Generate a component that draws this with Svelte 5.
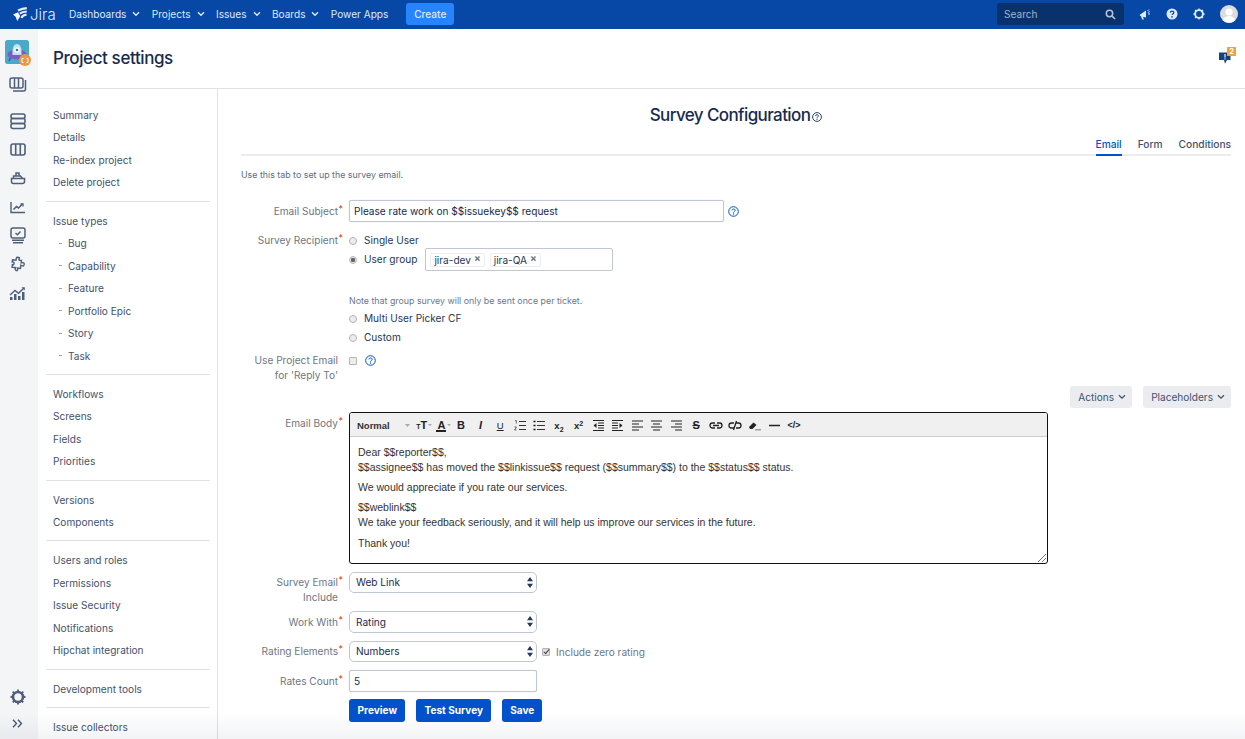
<script>
  const navItems = [
    { label: 'Dashboards', caret: true },
    { label: 'Projects', caret: true },
    { label: 'Issues', caret: true },
    { label: 'Boards', caret: true },
    { label: 'Power Apps', caret: false }
  ];

  const sideGroups = [
    { items: ['Summary', 'Details', 'Re-index project', 'Delete project'] },
    { title: 'Issue types', sub: ['Bug', 'Capability', 'Feature', 'Portfolio Epic', 'Story', 'Task'] },
    { items: ['Workflows', 'Screens', 'Fields', 'Priorities'] },
    { items: ['Versions', 'Components'] },
    { items: ['Users and roles', 'Permissions', 'Issue Security', 'Notifications', 'Hipchat integration'] },
    { items: ['Development tools'] },
    { items: ['Issue collectors'] }
  ];

  let subject = $state('Please rate work on $$issuekey$$ request');
  let recipient = $state('group');
  let replyTo = $state(false);
  let includeZero = $state(true);
  let rates = $state('5');
  let activeTab = $state('Email');
</script>

<div class="page">
  <header class="topbar">
    <div class="logo">
      <svg width="16" height="15" viewBox="0 0 16 15">
        <path d="M1 7.500 6 5.200l2.200 4L5.300 14 3.600 9.800z" fill="#fff"/>
        <path d="M6 3.400C8.500 2.400 11 1.600 14.800 1.200M7.800 6.600C9.500 5.400 11.800 4.700 14.800 4.500M9.500 11c.7-2 2.500-3 5-3.300" fill="none" stroke="#e6eefb" stroke-width="2.200"/>
      </svg>
      <span>Jira</span>
    </div>
    <nav class="nav">
      {#each navItems as item}
        <span class="nav-item">
          {item.label}
          {#if item.caret}
            <svg width="8" height="6" viewBox="0 0 8 6"><path d="M1 1.200 4 4.200l3-3" fill="none" stroke="#deebff" stroke-width="1.400"/></svg>
          {/if}
        </span>
      {/each}
      <button class="create">Create</button>
    </nav>
    <div class="top-right">
      <div class="search">
        <span>Search</span>
        <svg width="11" height="11" viewBox="0 0 11 11"><circle cx="4.500" cy="4.500" r="3.200" fill="none" stroke="#b3c2dc" stroke-width="1.500"/><path d="m7 7 3 3" stroke="#b3c2dc" stroke-width="1.700"/></svg>
      </div>
      <svg class="ti" width="12" height="12" viewBox="0 0 12 12"><path d="M.5 7 7 2.500v7L4 8.700l.8 2.800H3.200L2 8.200z" fill="#deebff"/><path d="M8.500 3 10 1.500M9 6h2M8.800 4.500l2-.8" stroke="#deebff" stroke-width=".9"/></svg>
      <svg class="ti" width="12" height="12" viewBox="0 0 12 12"><circle cx="6" cy="6" r="5.500" fill="#deebff"/><path d="M4.300 4.600C4.400 3.600 5 3.100 6 3.100s1.800.6 1.800 1.500c0 1.300-1.700 1.300-1.700 2.500" fill="none" stroke="#0747a6" stroke-width="1.300"/><circle cx="6" cy="8.900" r=".8" fill="#0747a6"/></svg>
      <svg class="ti" width="12" height="12" viewBox="0 0 12 12"><circle cx="6" cy="6" r="3.900" fill="none" stroke="#deebff" stroke-width="1.900"/><path d="M6 .4v2M6 9.600v2M.4 6h2M9.600 6h2M2 2l1.400 1.400M8.600 8.600 10 10M2 10l1.400-1.400M8.600 3.400 10 2" stroke="#deebff" stroke-width="1.300"/></svg>
      <svg class="avatar" width="18" height="18" viewBox="0 0 18 18"><circle cx="9" cy="9" r="9" fill="#dcdcdc"/><circle cx="9" cy="7" r="3.600" fill="#fff"/><path d="M2.800 15.400C4 12 6.400 11 9 11s5 1 6.200 4.400A9 9 0 0 1 2.800 15.400z" fill="#fff"/></svg>
    </div>
  </header>

  <div class="body">
    <aside class="rail">
      <div class="rail-top">
        <div class="project-logo">
          <svg width="24" height="24" viewBox="0 0 24 24">
            <rect width="24" height="24" rx="2.500" fill="#4aa8c8"/>
            <path d="M4 21l2-4M20 21l-2-4" stroke="#5b3fa8" stroke-width="1.500"/>
            <ellipse cx="12" cy="14.500" rx="9.500" ry="5" fill="#7b5cc4"/>
            <path d="M7.500 15c-.5-7 1-11 4.500-11s5 4 4.500 11z" fill="#bfe3ef"/>
            <circle cx="12" cy="10" r="2.800" fill="#fff"/>
            <circle cx="12" cy="10" r="1.300" fill="#3d6fa5"/>
          </svg>
          <span class="logo-badge"><svg width="8" height="7" viewBox="0 0 8 7"><path d="M2.500 1.500H1v4h1.500M5.500 1.500H7v4H5.500" fill="none" stroke="#fff" stroke-width="1"/></svg></span>
        </div>
        <div class="rail-icons">
          <svg width="18" height="16" viewBox="0 0 18 16" fill="none" stroke="#505f79" stroke-width="1.500"><rect x="1" y="1" width="13" height="10" rx="2"/><path d="M5.500 1v10M9.500 1v10M16.500 3v9a2 2 0 0 1-2 2H4"/></svg>
          <svg width="16" height="17" viewBox="0 0 16 17" fill="none" stroke="#505f79" stroke-width="1.600"><rect x="1" y="1" width="14" height="4.500" rx="2"/><rect x="1" y="5.500" width="14" height="5" rx="1.500"/><rect x="1" y="10.500" width="14" height="5" rx="2"/></svg>
          <svg width="16" height="13" viewBox="0 0 16 13" fill="none" stroke="#505f79" stroke-width="1.600"><rect x="1" y="1" width="14" height="11" rx="2"/><path d="M5.700 1v11M10.300 1v11"/></svg>
          <svg width="16" height="14" viewBox="0 0 16 14" fill="none" stroke="#505f79" stroke-width="1.500"><path d="M1.500 7.500h13v3a2 2 0 0 1-2 2h-9a2 2 0 0 1-2-2zM3.500 7.500V5h7l2 2.500M6 5V2h3v3"/></svg>
          <svg width="16" height="13" viewBox="0 0 16 13" fill="none" stroke="#505f79" stroke-width="1.400"><path d="M1 1v10.500h14"/><path d="M3.500 8.500 6.500 5.500l2 1.500 4-4" stroke-width="1.600"/><path d="M10.500 3h2.500v2.500" stroke-width="1.300"/></svg>
          <svg width="16" height="17" viewBox="0 0 16 17" fill="none" stroke="#505f79" stroke-width="1.500"><rect x="1" y="1" width="14" height="10" rx="2"/><path d="m5.500 6 2 1.800L10.500 4.500"/><path d="M2 13.300h12M3 15.700h10"/></svg>
          <svg width="16" height="16" viewBox="0 0 16 16" fill="none" stroke="#505f79" stroke-width="1.400"><path d="M6 1.500h2.500c.2 1-.3 1.500 0 2.500h2.500v2.500c1-.3 1.500-.8 2.500-.5.900.5.900 2.800 0 3.200-1 .3-1.500-.200-2.500-.5V12H8c.3 1 .8 1.500.3 2.500-1 .5-2.300 0-2.300-1-.2-.6.200-1 .200-1.500H2.500V9.500c1 .3 1.500 0 1.500-1.500S3 6.500 2 6.800V4.500h3.500C5.800 3.500 5 2.500 6 1.500z" transform="rotate(8 8 8)"/></svg>
          <svg width="17" height="15" viewBox="0 0 17 15"><path d="M1 14v-3h2.500v3zM5 14V8h2.500v6zM9 14v-4h2.500v4zM13 14V6h2.500v8z" fill="#505f79"/><path d="M1 9 6 4.500l3.500 2.800L15 2" fill="none" stroke="#505f79" stroke-width="1.400"/><path d="M12.500 1.300h3.300v3.300z" fill="#505f79"/></svg>
        </div>
      </div>
      <div class="rail-bottom">
        <svg width="16" height="16" viewBox="0 0 16 16" fill="none" stroke="#505f79"><circle cx="8" cy="8" r="5" stroke-width="2.600"/><path d="M8 .5v3M8 12.500v3M.5 8h3M12.500 8h3M2.700 2.700l2 2M11.300 11.300l2 2M2.700 13.300l2-2M11.300 4.700l2-2" stroke-width="1.800"/></svg>
        <svg width="11" height="9" viewBox="0 0 11 9" fill="none" stroke="#42526e" stroke-width="1.300"><path d="m1 .8 3.500 3.700L1 8.200M6 .8l3.500 3.700L6 8.200"/></svg>
      </div>
    </aside>

    <div class="content">
      <div class="title-bar">
        <h1>Project settings</h1>
        <svg class="feedback" width="17" height="17" viewBox="0 0 17 17">
          <path d="M0 5.500h11.500v7.500H8L6 16.800 5 13H0z" fill="#17437a"/>
          <path d="M6 7v3.500M6 11.300v1.200" stroke="#fff" stroke-width="1.100"/>
          <rect x="8" y="0" width="9" height="9" fill="#f0a33a" rx=".5"/>
          <text x="12.500" y="7.300" class="badge-num">2</text>
        </svg>
      </div>

      <div class="columns">
        <nav class="side">
          {#each sideGroups as group, i}
            <div class="side-group" class:first={i === 0}>
              {#if group.title}
                <a href="#top" class="side-link">{group.title}</a>
              {/if}
              {#each group.items ?? [] as item}
                <a href="#top" class="side-link">{item}</a>
              {/each}
              {#each group.sub ?? [] as item}
                <a href="#top" class="side-link sub"><i></i>{item}</a>
              {/each}
            </div>
          {/each}
        </nav>

        <main class="main">
          <h2>Survey Configuration<svg width="10" height="10" viewBox="0 0 10 10"><circle cx="5" cy="5" r="4.400" fill="none" stroke="#172b4d" stroke-width=".9"/><path d="M3.500 3.900C3.600 3.100 4.200 2.700 5 2.700s1.500.5 1.500 1.200c0 1-1.500 1-1.500 2" fill="none" stroke="#172b4d" stroke-width=".9"/><circle cx="5" cy="7.200" r=".6" fill="#172b4d"/></svg></h2>

          <div class="tabs">
            {#each ['Email', 'Form', 'Conditions'] as tab}
              <button class="tab" class:active={activeTab === tab} onclick={() => (activeTab = tab)}>{tab}</button>
            {/each}
          </div>

          <p class="intro">Use this tab to set up the survey email.</p>

          <div class="row subject-row">
            <div class="lbl">Email Subject<b>*</b></div>
            <div class="ctl inline">
              <input class="text subject" bind:value={subject} />
              <svg class="help-blue" width="11" height="11" viewBox="0 0 11 11"><use href="#qmark" /></svg>
            </div>
          </div>

          <div class="row recipient-row">
            <div class="lbl">Survey Recipient<b>*</b></div>
            <div class="ctl">
              <label class="radio"><input type="radio" value="single" bind:group={recipient} />Single User</label>
              <div class="group-line">
                <label class="radio"><input type="radio" value="group" bind:group={recipient} />User group</label>
                <div class="tag-box">
                  <span class="tag">jira-dev<em>×</em></span>
                  <span class="tag">jira-QA<em>×</em></span>
                </div>
              </div>
              <p class="note">Note that group survey will only be sent once per ticket.</p>
              <label class="radio r2"><input type="radio" value="multi" bind:group={recipient} />Multi User Picker CF</label>
              <label class="radio r2"><input type="radio" value="custom" bind:group={recipient} />Custom</label>
            </div>
          </div>

          <div class="row reply-row">
            <div class="lbl">Use Project Email<br />for 'Reply To'</div>
            <div class="ctl inline">
              <input class="check" type="checkbox" bind:checked={replyTo} />
              <svg class="help-blue" width="11" height="11" viewBox="0 0 11 11"><use href="#qmark" /></svg>
            </div>
          </div>

          <div class="action-row">
            <button class="ghost">Actions <svg width="8" height="6" viewBox="0 0 8 6"><path d="M1 1.200 4 4.200l3-3" fill="none" stroke="#42526e" stroke-width="1.300"/></svg></button>
            <button class="ghost">Placeholders <svg width="8" height="6" viewBox="0 0 8 6"><path d="M1 1.200 4 4.200l3-3" fill="none" stroke="#42526e" stroke-width="1.300"/></svg></button>
          </div>

          <div class="row body-row">
            <div class="lbl">Email Body<b>*</b></div>
            <div class="editor">
              <div class="toolbar">
                <span class="fmt">Normal<svg class="arrow" width="5" height="4" viewBox="0 0 5 4"><path d="M0 0h5L2.500 3z" fill="#aaa"/></svg></span>
                <span class="cell"><span class="t-size"><small>T</small>T</span><svg class="arrow" width="4" height="3" viewBox="0 0 5 4"><path d="M0 0h5L2.500 3z" fill="#aaa"/></svg></span>
                <span class="cell"><span class="t-color">A</span><svg class="arrow" width="4" height="3" viewBox="0 0 5 4"><path d="M0 0h5L2.500 3z" fill="#aaa"/></svg></span>
                <span class="cell t-b">B</span>
                <span class="cell t-i">I</span>
                <span class="cell t-u">U</span>
                <span class="cell"><svg width="12" height="11" viewBox="0 0 12 11"><path d="M5 1.500h7M5 5.500h7M5 9.500h7" stroke="#333" stroke-width="1"/><path d="M1 .5h1.300v3M.5 7h2l-2 3h2" stroke="#333" stroke-width=".7" fill="none"/></svg></span>
                <span class="cell"><svg width="12" height="11" viewBox="0 0 12 11"><path d="M4 1.500h8M4 5.500h8M4 9.500h8" stroke="#333" stroke-width="1"/><path d="M.5 1.500h2M.5 5.500h2M.5 9.500h2" stroke="#111" stroke-width="1.600"/></svg></span>
                <span class="cell t-x">x<sub>2</sub></span>
                <span class="cell t-x">x<sup>2</sup></span>
                <span class="cell"><svg width="11" height="11" viewBox="0 0 11 11"><path d="M0 .5h11M0 10.500h11M5 3h6M5 5.500h6M5 8h6" stroke="#222" stroke-width="1"/><path d="M3.500 3v5L.5 5.500z" fill="#222"/></svg></span>
                <span class="cell"><svg width="11" height="11" viewBox="0 0 11 11"><path d="M0 .5h11M0 10.500h11M0 3h6M0 5.500h6M0 8h6" stroke="#222" stroke-width="1"/><path d="M7.500 3v5l3-2.500z" fill="#222"/></svg></span>
                <span class="cell"><svg width="11" height="11" viewBox="0 0 11 11"><path d="M0 1h11M0 4h7M0 7h11M0 10h7" stroke="#222" stroke-width="1.100"/></svg></span>
                <span class="cell"><svg width="11" height="11" viewBox="0 0 11 11"><path d="M0 1h11M2 4h7M0 7h11M2 10h7" stroke="#222" stroke-width="1.100"/></svg></span>
                <span class="cell"><svg width="11" height="11" viewBox="0 0 11 11"><path d="M0 1h11M4 4h7M0 7h11M4 10h7" stroke="#222" stroke-width="1.100"/></svg></span>
                <span class="cell t-s">S</span>
                <span class="cell"><svg width="14" height="7" viewBox="0 0 14 7" fill="none" stroke="#222" stroke-width="1.300"><path d="M6 1H3.500a2.500 2.500 0 0 0 0 5H6M8 1h2.500a2.500 2.500 0 0 1 0 5H8M4 3.500h6"/></svg></span>
                <span class="cell"><svg width="14" height="11" viewBox="0 0 14 11" fill="none" stroke="#222" stroke-width="1.300"><path d="M6 3H3.500a2.500 2.500 0 0 0 0 5H6M8 3h2.500a2.500 2.500 0 0 1 0 5H8M8.500 1 5.500 10"/></svg></span>
                <span class="cell"><svg width="14" height="10" viewBox="0 0 14 10"><path d="M1 6 5.500 1.500l3 2.500L4.500 8H2z" fill="#222"/><path d="M7 8.800h6" stroke="#777" stroke-width="1"/></svg></span>
                <span class="cell"><svg width="11" height="3" viewBox="0 0 11 3"><path d="M0 1.500h11" stroke="#222" stroke-width="1.600"/></svg></span>
                <span class="cell t-code">&lt;/&gt;</span>
              </div>
              <div class="editor-text">
                <p>Dear $$reporter$$,<br />$$assignee$$ has moved the $$linkissue$$ request ($$summary$$) to the $$status$$ status.</p>
                <p>We would appreciate if you rate our services.</p>
                <p>$$weblink$$<br />We take your feedback seriously, and it will help us improve our services in the future.</p>
                <p>Thank you!</p>
              </div>
              <svg class="grip" width="8" height="8" viewBox="0 0 8 8"><path d="M8 0 0 8M8 4 4 8" stroke="#555" stroke-width=".8"/></svg>
            </div>
          </div>

          <div class="row include-row">
            <div class="lbl">Survey Email<b>*</b><br />Include</div>
            <div class="sel"><span>Web Link</span><svg width="6" height="11" viewBox="0 0 7 11" preserveAspectRatio="none"><path d="M3.500 0 7 4.200H0zM3.500 11 0 6.800h7z" fill="#253858"/></svg></div>
          </div>

          <div class="row work-row">
            <div class="lbl">Work With<b>*</b></div>
            <div class="sel"><span>Rating</span><svg width="6" height="11" viewBox="0 0 7 11" preserveAspectRatio="none"><path d="M3.500 0 7 4.200H0zM3.500 11 0 6.800h7z" fill="#253858"/></svg></div>
          </div>

          <div class="row elements-row">
            <div class="lbl">Rating Elements<b>*</b></div>
            <div class="ctl inline">
              <div class="sel"><span>Numbers</span><svg width="6" height="11" viewBox="0 0 7 11" preserveAspectRatio="none"><path d="M3.500 0 7 4.200H0zM3.500 11 0 6.800h7z" fill="#253858"/></svg></div>
              <label class="zero"><input class="check" type="checkbox" bind:checked={includeZero} />Include zero rating</label>
            </div>
          </div>

          <div class="row count-row">
            <div class="lbl">Rates Count<b>*</b></div>
            <input class="text count" bind:value={rates} />
          </div>

          <div class="row buttons-row">
            <div class="lbl"></div>
            <div class="buttons">
              <button class="primary">Preview</button>
              <button class="primary">Test Survey</button>
              <button class="primary">Save</button>
            </div>
          </div>
        </main>
      </div>
    </div>
  </div>

  <div class="fade"></div>

  <svg width="0" height="0" class="defs">
    <symbol id="qmark" viewBox="0 0 11 11">
      <circle cx="5.500" cy="5.500" r="4.800" fill="none" stroke="#0052cc" stroke-width="1"/>
      <path d="M3.800 4.400C3.900 3.500 4.600 3 5.500 3s1.700.6 1.700 1.400c0 1.100-1.700 1.100-1.700 2.200" fill="none" stroke="#0052cc" stroke-width="1"/>
      <circle cx="5.500" cy="8" r=".7" fill="#0052cc"/>
    </symbol>
  </svg>
</div>

<style>
  :global(body) {
    margin: 0;
    background: #fff;
    font-family: Inter, "Liberation Sans", sans-serif;
    color: #172b4d;
  }

  .page {
    position: relative;
    width: 1245px;
    height: 739px;
    overflow: hidden;
    font-size: 10.1px;
  }

  .defs {
    position: absolute;
  }

  .topbar {
    height: 29px;
    box-sizing: border-box;
    padding-bottom: 1px;
    background: #0747a6;
    display: flex;
    align-items: center;
    color: #deebff;
  }

  .logo {
    display: flex;
    align-items: center;
    gap: 2px;
    margin-left: 12px;
    width: 57px;
    flex: none;
    color: #deebff;
  }

  .logo span {
    font-size: 15px;
    font-weight: 300;
  }

  .nav {
    display: flex;
    align-items: center;
  }

  .nav-item {
    display: inline-flex;
    align-items: center;
    gap: 6px;
    margin-right: 11.4px;
    white-space: nowrap;
  }

  .create {
    margin-left: 6.5px;
    width: 48px;
    height: 22px;
    border: 0;
    border-radius: 3px;
    background: #2684ff;
    color: #deebff;
    font: 500 10.1px Inter, sans-serif;
  }

  .top-right {
    margin-left: auto;
    display: flex;
    align-items: center;
  }

  .search {
    width: 127px;
    height: 22px;
    box-sizing: border-box;
    background: #09326c;
    border-radius: 3px;
    padding: 0 8px 0 7px;
    display: flex;
    align-items: center;
    justify-content: space-between;
    color: #9fb3d1;
  }

  .ti {
    margin-left: 15px;
  }

  .avatar {
    margin: 0 7px 0 15px;
  }

  .body {
    display: flex;
    height: 710px;
  }

  .rail {
    width: 38px;
    flex: none;
    box-sizing: border-box;
    padding-right: 3px;
    background: #f4f5f7;
    display: flex;
    flex-direction: column;
    justify-content: space-between;
    align-items: center;
  }

  .rail-top {
    display: flex;
    flex-direction: column;
    align-items: center;
    padding-top: 11px;
  }

  .project-logo {
    position: relative;
    width: 24px;
    height: 24px;
    margin-right: 1px;
  }

  .logo-badge {
    position: absolute;
    right: -2px;
    bottom: -2px;
    width: 12px;
    height: 12px;
    border-radius: 50%;
    background: #f0963a;
    display: flex;
    align-items: center;
    justify-content: center;
  }

  .rail-icons {
    display: grid;
    grid-template-rows: 35.7px;
    grid-auto-rows: 28.7px;
    align-items: center;
    justify-items: center;
    margin-top: 7px;
  }

  .rail-icons svg:first-child {
    align-self: start;
    margin-top: 6px;
  }

  .rail-bottom {
    display: flex;
    flex-direction: column;
    align-items: center;
    gap: 14px;
    padding-bottom: 11px;
  }

  .content {
    flex: 1;
    min-width: 0;
  }

  .title-bar {
    height: 60px;
    box-sizing: border-box;
    border-bottom: 1px solid #dfe1e6;
    padding: 0 9px 0 15px;
    display: flex;
    align-items: center;
    justify-content: space-between;
  }

  h1 {
    margin: -2px 0 0;
    font-size: 17px;
    font-weight: 500;
    color: #172b4d;
    letter-spacing: -0.4px;
  }

  .feedback {
    margin-top: -6px;
  }

  .badge-num {
    font-size: 7.5px;
    font-weight: 700;
    fill: #fff;
    text-anchor: middle;
  }

  .columns {
    display: flex;
    height: 650px;
  }

  .side {
    width: 180px;
    flex: none;
    box-sizing: border-box;
    border-right: 1px solid #dfe1e6;
    padding: 14.75px 7px 0 8px;
  }

  .side-group {
    border-top: 1px solid #dfe1e6;
    padding: 8px 0 6.75px;
  }

  .side-group.first {
    border-top: 0;
    padding-top: 0;
  }

  .side-link {
    display: block;
    height: 22.5px;
    line-height: 22.5px;
    padding-left: 7px;
    color: #42526e;
    text-decoration: none;
    white-space: nowrap;
  }

  .side-link.sub {
    padding-left: 13px;
    display: flex;
    align-items: center;
  }

  .side-link.sub i {
    width: 3px;
    height: 1px;
    background: #97a0af;
    margin-right: 6px;
  }

  .main {
    flex: 1;
    min-width: 0;
    padding: 0 14px 0 23px;
  }

  h2 {
    margin: 15px 0 0;
    height: 23px;
    line-height: 23px;
    font-size: 17px;
    font-weight: 500;
    letter-spacing: -0.6px;
    display: flex;
    justify-content: center;
    align-items: center;
  }

  h2 svg {
    margin-left: 2px;
    margin-top: 2px;
  }

  .tabs {
    display: flex;
    justify-content: flex-end;
    gap: 16px;
    box-sizing: border-box;
    height: 29px;
    margin-bottom: 13px;
    padding-top: 6px;
    border-bottom: 2px solid #ebecf0;
  }

  .tab {
    border: 0;
    background: none;
    padding: 1px 0 0;
    height: 23px;
    color: #42526e;
    font: 500 10.2px Inter, sans-serif;
    border-bottom: 2px solid transparent;
  }

  .tab.active {
    color: #0052cc;
    border-bottom-color: #0052cc;
  }

  .intro {
    margin: 0;
    font-size: 8.85px;
    line-height: 12px;
    color: #5e6c84;
  }

  .row {
    display: flex;
    align-items: flex-start;
  }

  .lbl {
    width: 97px;
    flex: none;
    margin-right: 11px;
    text-align: right;
    color: #6f7682;
    line-height: 15px;
    white-space: nowrap;
    position: relative;
  }

  .lbl b {
    position: absolute;
    color: #de350b;
    font-weight: 400;
    font-size: 9px;
    line-height: 9px;
    margin-left: 0.5px;
  }

  .ctl {
    flex: 1;
    min-width: 0;
    color: #253858;
  }

  .inline {
    display: flex;
    align-items: center;
  }

  .text {
    box-sizing: border-box;
    height: 22px;
    border: 1px solid #c1c7d0;
    border-radius: 2px;
    padding: 0 4px;
    font: 10.1px Inter, sans-serif;
    color: #172b4d;
    outline: none;
    box-shadow: 0 0 1px rgba(9, 30, 66, 0.2);
  }

  .subject {
    width: 375px;
  }

  .count {
    width: 188px;
  }

  .subject-row {
    margin-top: 19px;
  }

  .subject-row .lbl {
    padding-top: 4px;
  }

  .help-blue {
    margin-left: 4px;
    flex: none;
  }

  .recipient-row {
    margin-top: 11px;
  }

  .radio {
    display: flex;
    align-items: center;
    height: 15px;
    line-height: 15px;
    white-space: nowrap;
  }

  .radio input {
    appearance: none;
    width: 8px;
    height: 8px;
    margin: 0 7px 0 0;
    border-radius: 50%;
    border: 1px solid #b5b5b5;
    background: #ececec;
    flex: none;
  }

  .radio input:checked {
    background: radial-gradient(circle, #666 0 2px, #ececec 2.500px);
  }

  .group-line {
    display: flex;
    align-items: center;
    height: 23px;
  }

  .tag-box {
    box-sizing: border-box;
    width: 188px;
    height: 23px;
    margin-left: 8px;
    border: 1px solid #c1c7d0;
    border-radius: 2px;
    padding: 4px 4px 0;
    display: flex;
    align-items: flex-start;
    gap: 5px;
  }

  .tag {
    display: inline-block;
    height: 12px;
    line-height: 12px;
    padding: 0 3px;
    border: 1px solid #ebecf0;
    border-radius: 2px;
    color: #253858;
    white-space: nowrap;
  }

  .tag em {
    font-style: normal;
    font-weight: 700;
    font-size: 10px;
    color: #6b778c;
    position: relative;
    top: -2px;
    margin-left: 3px;
  }

  .note {
    margin: 24px 0 0;
    font-size: 8.85px;
    line-height: 12px;
    color: #6b778c;
  }

  .r2 {
    margin-top: 4px;
  }

  .reply-row {
    margin-top: 8px;
  }

  .reply-row .ctl {
    height: 15px;
  }

  .reply-row .help-blue {
    margin-left: 1px;
  }

  .check {
    appearance: none;
    width: 8px;
    height: 8px;
    margin: 0 7px 0 0;
    border: 1px solid #b5b5b5;
    border-radius: 1px;
    background: #ececec;
    flex: none;
    position: relative;
  }

  .check:checked {
    background: #ddd;
  }

  .check:checked::after {
    content: '';
    position: absolute;
    left: 1.5px;
    top: -1px;
    width: 2px;
    height: 5px;
    border: solid #444;
    border-width: 0 1.500px 1.500px 0;
    transform: rotate(40deg);
  }

  .action-row {
    display: flex;
    justify-content: flex-end;
    gap: 11px;
    margin-top: 3px;
  }

  .ghost {
    height: 22px;
    padding: 0 6px 0 8px;
    border: 0;
    border-radius: 3px;
    background: #ebecf0;
    color: #42526e;
    font: 10.1px Inter, sans-serif;
    display: flex;
    align-items: center;
    gap: 4px;
  }

  .body-row {
    margin-top: 4px;
  }

  .body-row .lbl {
    padding-top: 4px;
  }

  .editor {
    position: relative;
    width: 699px;
    height: 152px;
    box-sizing: border-box;
    border: 1px solid #111;
    border-radius: 3px;
    font-family: "Liberation Sans", Arial, sans-serif;
    font-size: 10.5px;
    color: #333;
    overflow: hidden;
  }

  .toolbar {
    height: 24px;
    box-sizing: border-box;
    padding: 2px 0 0 7px;
    background: #f0f0f0;
    border-bottom: 1px solid #ccc;
    display: flex;
    align-items: center;
  }

  .fmt {
    font-weight: 700;
    font-size: 9.5px;
    width: 55px;
    flex: none;
    color: #333;
    position: relative;
  }

  .fmt .arrow {
    position: absolute;
    right: 2px;
    top: 4px;
  }

  .cell {
    position: relative;
    width: 19.6px;
    flex: none;
    display: flex;
    align-items: center;
    justify-content: center;
    color: #222;
    white-space: nowrap;
    line-height: 1;
  }

  .cell > .arrow {
    position: absolute;
    right: 0;
    top: 50%;
    margin-top: -2px;
  }

  .t-size {
    font-size: 11px;
    font-weight: 700;
  }

  .t-size small {
    font-size: 7px;
  }

  .t-color {
    font-size: 11px;
    font-weight: 700;
    border-bottom: 2px solid #222;
    width: 10px;
    line-height: 10px;
    text-align: center;
  }

  .t-b {
    font-weight: 700;
    font-size: 11px;
  }

  .t-i {
    font-style: italic;
    font-weight: 700;
    font-size: 11px;
  }

  .t-u {
    text-decoration: underline;
    font-size: 9.5px;
  }

  .t-x {
    font-size: 9.5px;
    font-weight: 700;
    display: block;
    text-align: center;
  }

  .t-x sub, .t-x sup {
    font-size: 7px;
    line-height: 0;
  }

  .t-x sub {
    vertical-align: -3px;
  }

  .t-x sup {
    vertical-align: 3px;
  }

  .t-s {
    font-size: 11px;
    font-weight: 700;
    text-decoration: line-through;
  }

  .t-code {
    font-size: 9px;
    font-weight: 700;
  }

  .editor-text {
    padding: 8px 8px 0;
    line-height: 15px;
    white-space: nowrap;
  }

  .editor-text p {
    margin: 0 0 5px;
  }

  .editor-text p:last-child {
    margin-top: 6px;
  }

  .grip {
    position: absolute;
    right: 1px;
    bottom: 1px;
  }

  .include-row {
    margin-top: 8px;
  }

  .sel {
    box-sizing: border-box;
    width: 188px;
    height: 21px;
    border: 1px solid #c1c7d0;
    border-radius: 5px;
    padding: 0 3px 1px 6px;
    display: flex;
    align-items: center;
    justify-content: space-between;
    color: #172b4d;
    background: #fff;
    flex: none;
  }

  .include-row .lbl, .elements-row .lbl {
    padding-top: 3px;
  }

  .work-row .lbl, .count-row .lbl {
    padding-top: 4px;
  }

  .work-row {
    margin-top: 6px;
  }

  .work-row .sel {
    height: 22px;
  }

  .elements-row {
    margin-top: 8px;
  }

  .zero {
    display: flex;
    align-items: center;
    margin-left: 5px;
    color: #6b778c;
    white-space: nowrap;
  }

  .zero .check {
    margin-right: 6px;
  }

  .count-row {
    margin-top: 8px;
  }

  .buttons-row {
    margin-top: 7px;
  }

  .buttons {
    display: flex;
    gap: 11px;
  }

  .primary {
    height: 23px;
    padding: 0 8px 1px;
    border: 0;
    border-radius: 3px;
    background: #0052cc;
    color: #fff;
    font: 700 10.1px Inter, sans-serif;
  }

  .primary:first-child {
    padding: 0 8.5px 1px;
  }

  .fade {
    position: absolute;
    left: 0;
    right: 0;
    bottom: 0;
    height: 26px;
    background: linear-gradient(to bottom, rgba(255, 255, 255, 0), rgba(9, 30, 66, 0.05));
    pointer-events: none;
  }
</style>
